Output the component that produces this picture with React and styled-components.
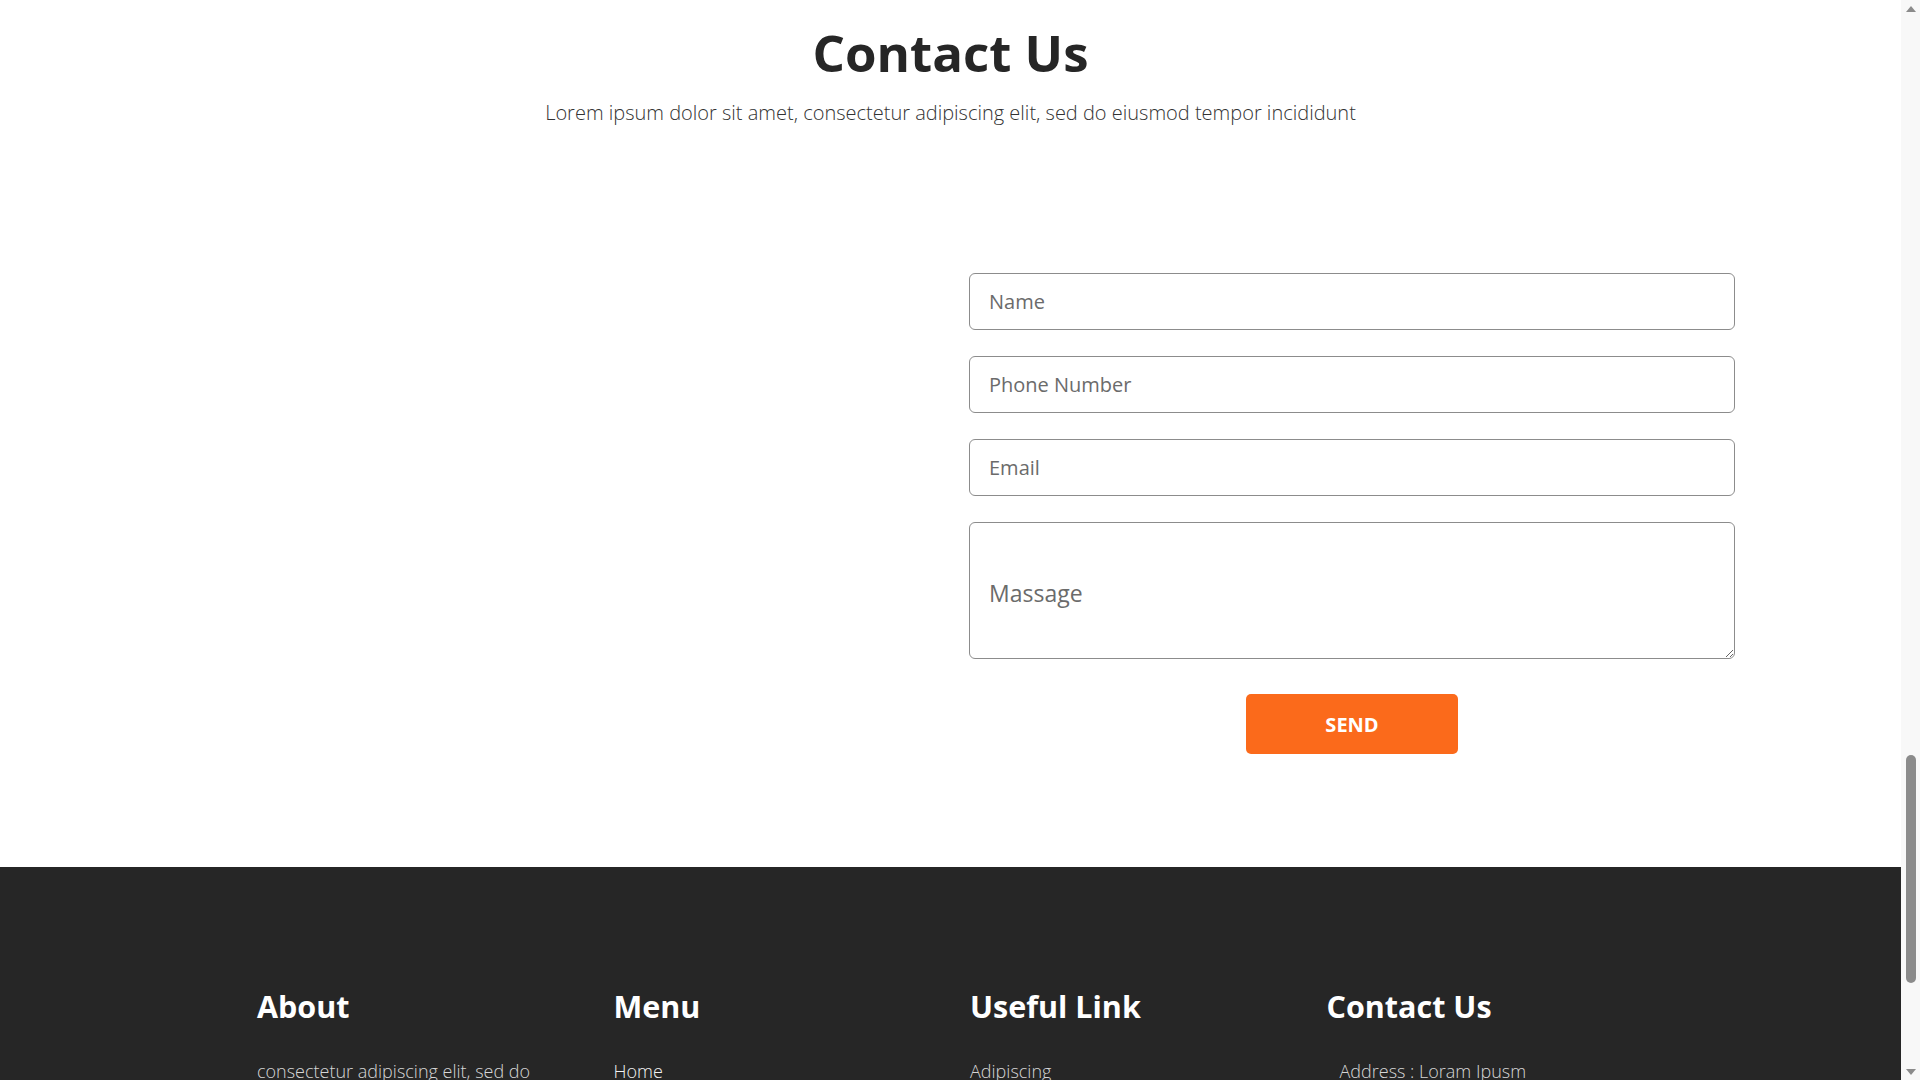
import React from "react";
import styled, { createGlobalStyle } from "styled-components";

const GlobalStyle = createGlobalStyle`
  html, body {
    margin: 0;
    padding: 0;
    height: 100%;
    overflow: hidden;
  }
  body {
    font-family: "Open Sans", "Noto Sans", sans-serif;
    background: #fff;
    color: #262626;
  }
  * {
    box-sizing: border-box;
  }
`;

const Frame = styled.div`
  display: flex;
  height: 100vh;
`;

const Page = styled.div`
  flex: 1;
  min-width: 0;
  display: flex;
  flex-direction: column;
  overflow: hidden;
`;

// contact section

const ContactSection = styled.section`
  padding: 21px 0 113px;
`;

const Heading = styled.h2`
  margin: 0;
  text-align: center;
  font-size: 51px;
  font-weight: 700;
  line-height: 1.22;
  color: #262626;
`;

const Lead = styled.p`
  margin: 15px 0 0;
  text-align: center;
  font-size: 20px;
  font-weight: 300;
  line-height: 1.5;
  color: #333;
`;

const ContactBody = styled.div`
  display: grid;
  grid-template-columns: 1fr 766px;
  padding: 0 166px 0 257px;
  margin-top: 145px;
`;

const MapSlot = styled.div``;

const Form = styled.form`
  display: flex;
  flex-direction: column;
  gap: 26px;
`;

const Field = styled.input`
  height: 57px;
  width: 100%;
  border: 1px solid #8c8c8c;
  border-radius: 6px;
  padding: 0 19px;
  font-family: inherit;
  font-size: 20px;
  color: #444;
  outline: none;

  &::placeholder {
    color: #6b6b6b;
  }
`;

const Message = styled.textarea`
  height: 137px;
  width: 100%;
  border: 1px solid #8c8c8c;
  border-radius: 6px;
  padding: 53px 19px 0;
  font-family: inherit;
  font-size: 23px;
  line-height: 1.5;
  color: #444;
  resize: vertical;
  outline: none;

  &::placeholder {
    color: #6b6b6b;
  }
`;

const SendButton = styled.button`
  align-self: center;
  width: 212px;
  height: 60px;
  margin-top: 9px;
  border: none;
  border-radius: 5px;
  background: #fb6a1b;
  color: #fff;
  font-family: inherit;
  font-size: 20px;
  font-weight: 700;
  text-transform: uppercase;
  cursor: pointer;
`;

// footer

const Footer = styled.footer`
  flex: 1;
  background: #262626;
  padding: 120px 0 60px;
`;

const FooterGrid = styled.div`
  display: grid;
  grid-template-columns: repeat(4, 356.5px);
  padding-left: 257px;
`;

const FooterCol = styled.div`
  display: flex;
  flex-direction: column;
`;

const FooterTitle = styled.h3`
  margin: 0 0 31px;
  font-size: 30.5px;
  font-weight: 700;
  line-height: 1.25;
  color: #fff;
`;

const FooterText = styled.p`
  margin: 0;
  max-width: 300px;
  font-size: 18px;
  font-weight: 300;
  line-height: 1.7;
  color: #d6d6d6;
`;

const FooterLink = styled.a`
  display: block;
  padding-left: ${(p) => (p.$indent ? "13px" : "0")};
  font-size: 18px;
  font-weight: 300;
  line-height: 1.7;
  color: ${(p) => (p.$bright ? "#f2f2f2" : "#d6d6d6")};
  text-decoration: none;
`;

// scroll rail

const ScrollRail = styled.div`
  width: 19px;
  flex-shrink: 0;
  display: flex;
  flex-direction: column;
  align-items: center;
  background: #f8f8f8;
`;

const RailArrow = styled.div`
  height: 17px;
  width: 100%;
  display: flex;
  align-items: center;
  justify-content: center;
`;

const RailTrack = styled.div`
  flex: 1;
  width: 100%;
  display: flex;
  justify-content: center;
  padding-top: ${(p) => p.$offset}px;
`;

const RailThumb = styled.div`
  width: 10px;
  height: ${(p) => p.$size}px;
  border-radius: 5px;
  background: #8b8b8b;
`;

const Arrow = ({ down }) => (
  <svg width="10" height="6" viewBox="0 0 10 6">
    <path d={down ? "M0 0h10L5 6z" : "M0 6h10L5 0z"} fill="#8b8b8b" />
  </svg>
);

const footerCols = [
  { title: "About", items: ["consectetur adipiscing elit, sed do", "eiusmod tempor incididunt ut labore", "et dolore magna aliqua."], kind: "text" },
  { title: "Menu", items: ["Home", "About", "Services", "Contact"], kind: "menu" },
  { title: "Useful Link", items: ["Adipiscing", "Elit", "Eiusmod", "Tempor"], kind: "useful" },
  { title: "Contact Us", items: ["Address : Loram Ipusm", "Call : +01 1234567890", "Email : demo@gmail.com"], kind: "contact" },
];

export default function App() {
  return (
    <>
      <GlobalStyle />
      <Frame>
        <Page>
          <ContactSection>
            <Heading>Contact Us</Heading>
            <Lead>
              Lorem ipsum dolor sit amet, consectetur adipiscing elit, sed do eiusmod tempor incididunt
            </Lead>
            <ContactBody>
              <MapSlot />
              <Form onSubmit={(e) => e.preventDefault()}>
                <Field type="text" placeholder="Name" />
                <Field type="text" placeholder="Phone Number" />
                <Field type="email" placeholder="Email" />
                <Message placeholder="Massage" />
                <SendButton type="submit">Send</SendButton>
              </Form>
            </ContactBody>
          </ContactSection>
          <Footer>
            <FooterGrid>
              {footerCols.map((col) => (
                <FooterCol key={col.title}>
                  <FooterTitle>{col.title}</FooterTitle>
                  {col.kind === "text" ? (
                    <FooterText>{col.items.join(" ")}</FooterText>
                  ) : (
                    col.items.map((item) => (
                      <FooterLink
                        key={item}
                        href="#"
                        $bright={col.kind === "menu"}
                        $indent={col.kind === "contact"}
                      >
                        {item}
                      </FooterLink>
                    ))
                  )}
                </FooterCol>
              ))}
            </FooterGrid>
          </Footer>
        </Page>
        <ScrollRail>
          <RailArrow>
            <Arrow />
          </RailArrow>
          <RailTrack $offset={738}>
            <RailThumb $size={228} />
          </RailTrack>
          <RailArrow>
            <Arrow down />
          </RailArrow>
        </ScrollRail>
      </Frame>
    </>
  );
}
